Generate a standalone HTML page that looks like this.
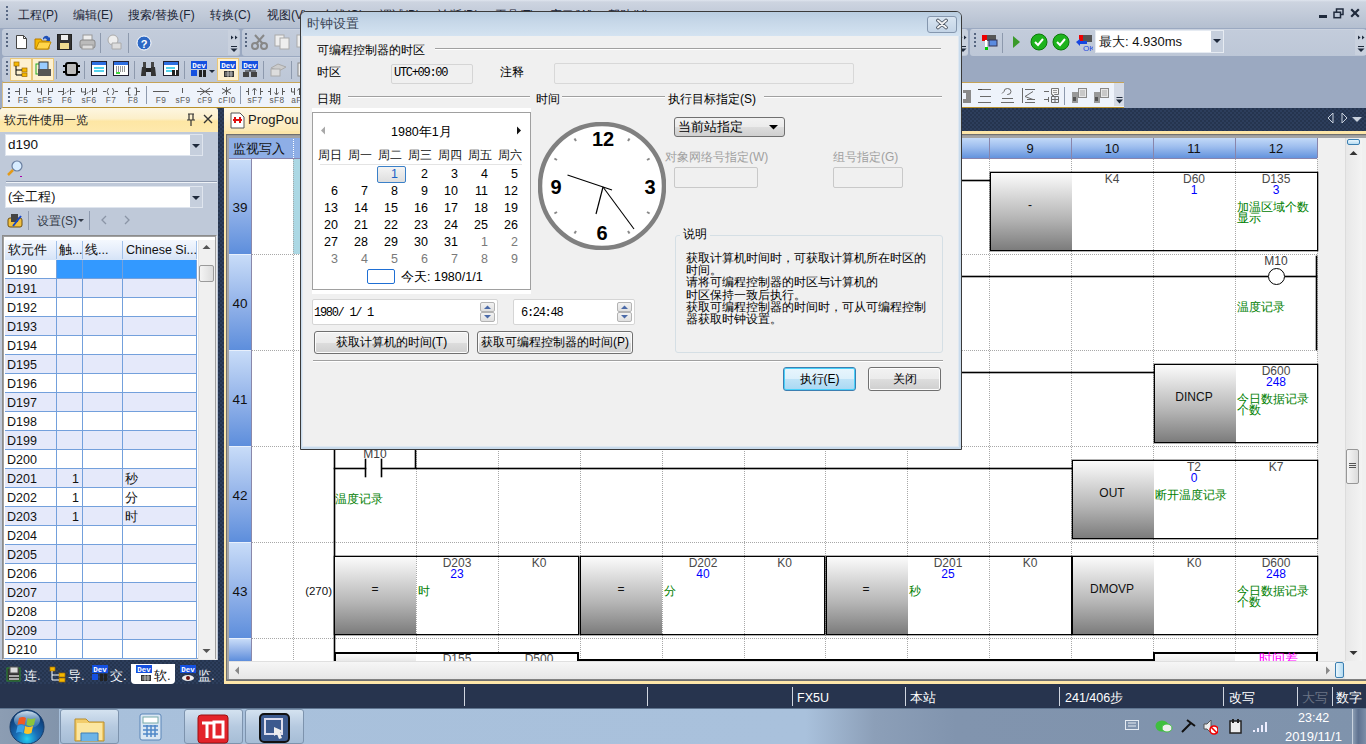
<!DOCTYPE html><html><head><meta charset="utf-8"><style>
html,body{margin:0;padding:0;}
body{width:1366px;height:744px;overflow:hidden;position:relative;background:#9ba9c1;font-family:"Liberation Sans",sans-serif;font-size:12px;color:#000;}
div{position:absolute;box-sizing:border-box;white-space:nowrap;}
.t{line-height:1;}
</style></head><body>
<div style="left:0px;top:0px;width:1366px;height:28px;background:linear-gradient(#dfe5ee 0,#cdd4e0 2px,#b4bfd0 100%);"></div>
<div style="left:6px;top:6px;width:2px;height:2px;background:#5a6a85;"></div>
<div style="left:6px;top:10px;width:2px;height:2px;background:#5a6a85;"></div>
<div style="left:6px;top:14px;width:2px;height:2px;background:#5a6a85;"></div>
<div style="left:6px;top:18px;width:2px;height:2px;background:#5a6a85;"></div>
<div style="left:18px;top:8px;font-size:12px;color:#1b2536;line-height:15px;">工程(P)</div>
<div style="left:73px;top:8px;font-size:12px;color:#1b2536;line-height:15px;">编辑(E)</div>
<div style="left:128px;top:8px;font-size:12px;color:#1b2536;line-height:15px;">搜索/替换(F)</div>
<div style="left:210px;top:8px;font-size:12px;color:#1b2536;line-height:15px;">转换(C)</div>
<div style="left:267px;top:8px;font-size:12px;color:#1b2536;line-height:15px;">视图(V)</div>
<div style="left:322px;top:8px;font-size:12px;color:#1b2536;line-height:15px;">在线(O)</div>
<div style="left:380px;top:8px;font-size:12px;color:#1b2536;line-height:15px;">调试(B)</div>
<div style="left:438px;top:8px;font-size:12px;color:#1b2536;line-height:15px;">诊断(D)</div>
<div style="left:495px;top:8px;font-size:12px;color:#1b2536;line-height:15px;">工具(T)</div>
<div style="left:550px;top:8px;font-size:12px;color:#1b2536;line-height:15px;">窗口(W)</div>
<div style="left:608px;top:8px;font-size:12px;color:#1b2536;line-height:15px;">帮助(H)</div>
<div style="left:1319px;top:15px;width:8px;height:3px;background:#1f2a3c;"></div>
<svg style="position:absolute;left:1333px;top:8px" width="11" height="11"><rect x="3.5" y="1" width="6.5" height="5.5" fill="none" stroke="#1f2a3c" stroke-width="1.5"/><rect x="1" y="4.2" width="6.5" height="5.5" fill="#bcc6d5" stroke="#1f2a3c" stroke-width="1.5"/></svg>
<svg style="position:absolute;left:1350px;top:8px" width="10" height="10"><path d="M1.2 1.2L8.8 8.8M8.8 1.2L1.2 8.8" stroke="#1f2a3c" stroke-width="2.2"/></svg>
<div style="left:2px;top:29px;width:238px;height:27px;background:linear-gradient(#d3dae5 0,#c3ccdb 1px,#bdc7d7 100%);border-radius:3px;"></div>
<div style="left:6px;top:33px;width:2px;height:2px;background:#56657f;"></div>
<div style="left:6px;top:37px;width:2px;height:2px;background:#56657f;"></div>
<div style="left:6px;top:41px;width:2px;height:2px;background:#56657f;"></div>
<div style="left:6px;top:45px;width:2px;height:2px;background:#56657f;"></div>
<svg style="position:absolute;left:15px;top:34px" width="13" height="16" viewBox="0 0 13 16"><path d="M1.5 1.5h7l3 3v10h-10z" fill="#fff" stroke="#444"/><path d="M8.5 1.5v3h3" fill="none" stroke="#444"/></svg>
<svg style="position:absolute;left:34px;top:34px" width="18" height="16" viewBox="0 0 18 16"><path d="M1 5h6l1 2h7v8H1z" fill="#f5b800" stroke="#b87a00"/><path d="M2 15l3-7h12l-3 7z" fill="#ffd54a" stroke="#c08a00"/><path d="M9 4c2-3 5-3 6 0l1-1v4h-4l1-1c-1-2-3-2-4 0z" fill="#1d4fb8"/></svg>
<svg style="position:absolute;left:57px;top:34px" width="15" height="16" viewBox="0 0 15 16"><rect x="0.5" y="0.5" width="14" height="15" fill="#333" stroke="#222"/><rect x="4" y="1" width="7" height="5" fill="#eee"/><rect x="3" y="9" width="9" height="6" fill="#f0dc90"/></svg>
<svg style="position:absolute;left:79px;top:34px" width="17" height="16" viewBox="0 0 17 16"><rect x="4" y="1" width="9" height="6" fill="#eee" stroke="#999"/><rect x="1" y="6" width="15" height="8" rx="2" fill="#bbb" stroke="#888"/><rect x="3" y="11" width="11" height="4" fill="#ddd" stroke="#999"/></svg>
<div style="left:100px;top:33px;width:1px;height:20px;background:#8d99ad;"></div>
<svg style="position:absolute;left:107px;top:34px" width="16" height="16" viewBox="0 0 16 16"><circle cx="6" cy="6" r="5" fill="#eee" stroke="#aaa"/><path d="M5 9h9v6H5z" fill="#ddd" stroke="#aaa"/></svg>
<div style="left:128px;top:33px;width:1px;height:20px;background:#8d99ad;"></div>
<svg style="position:absolute;left:136px;top:35px" width="16" height="16" viewBox="0 0 16 16"><circle cx="8" cy="8" r="7" fill="#2d68c4" stroke="#fff" stroke-width="1"/><text x="8" y="12.5" font-size="11" font-weight="bold" fill="#fff" text-anchor="middle" font-family="Liberation Sans">?</text></svg>
<div style="left:228px;top:30px;width:11px;height:25px;background:#c9d1de;border-radius:0 3px 3px 0;"></div>
<svg style="position:absolute;left:229px;top:33px" width="9" height="22" viewBox="0 0 9 22"><path d="M2 2.5l2.5 2-2.5 2zM6 2.5l2.5 2-2.5 2z" fill="#1f2a3c"/><path d="M2 13.5h6" stroke="#1f2a3c" stroke-width="1"/><path d="M1.5 15.5h7l-3.5 3.5z" fill="#1f2a3c"/></svg>
<div style="left:242px;top:29px;width:726px;height:27px;background:linear-gradient(#d3dae5 0,#c3ccdb 1px,#bdc7d7 100%);border-radius:3px;"></div>
<div style="left:957px;top:30px;width:11px;height:25px;background:#c9d1de;border-radius:0 3px 3px 0;"></div>
<svg style="position:absolute;left:958px;top:33px" width="9" height="22" viewBox="0 0 9 22"><path d="M2 2.5l2.5 2-2.5 2zM6 2.5l2.5 2-2.5 2z" fill="#1f2a3c"/><path d="M2 13.5h6" stroke="#1f2a3c" stroke-width="1"/><path d="M1.5 15.5h7l-3.5 3.5z" fill="#1f2a3c"/></svg>
<div style="left:245px;top:33px;width:2px;height:2px;background:#56657f;"></div>
<div style="left:245px;top:37px;width:2px;height:2px;background:#56657f;"></div>
<div style="left:245px;top:41px;width:2px;height:2px;background:#56657f;"></div>
<div style="left:245px;top:45px;width:2px;height:2px;background:#56657f;"></div>
<svg style="position:absolute;left:251px;top:34px" width="17" height="16" viewBox="0 0 17 16"><circle cx="4" cy="12" r="3" fill="none" stroke="#888" stroke-width="2"/><circle cx="13" cy="12" r="3" fill="none" stroke="#888" stroke-width="2"/><path d="M5 10L13 1M12 10L4 1" stroke="#888" stroke-width="2"/></svg>
<svg style="position:absolute;left:274px;top:34px" width="16" height="16" viewBox="0 0 16 16"><rect x="1" y="1" width="9" height="11" fill="#eee" stroke="#aaa"/><rect x="6" y="4" width="9" height="11" fill="#eee" stroke="#aaa"/></svg>
<svg style="position:absolute;left:296px;top:34px" width="6" height="16" viewBox="0 0 6 16"><rect x="1" y="1" width="8" height="12" fill="#eee" stroke="#aaa"/></svg>
<div style="left:970px;top:29px;width:396px;height:27px;background:linear-gradient(#d3dae5 0,#c3ccdb 1px,#bdc7d7 100%);border-radius:3px;"></div>
<div style="left:974px;top:33px;width:2px;height:2px;background:#56657f;"></div>
<div style="left:974px;top:37px;width:2px;height:2px;background:#56657f;"></div>
<div style="left:974px;top:41px;width:2px;height:2px;background:#56657f;"></div>
<div style="left:974px;top:45px;width:2px;height:2px;background:#56657f;"></div>
<svg style="position:absolute;left:981px;top:34px" width="17" height="18" viewBox="0 0 17 18"><rect x="1" y="1" width="14" height="6" fill="#555"/><rect x="1" y="1" width="5" height="6" fill="#e00"/><rect x="8" y="6" width="8" height="6" fill="#5b8be0" stroke="#335"/><path d="M5 6v8" stroke="#fff" stroke-width="2"/><rect x="4" y="13" width="3" height="3" fill="#0c0"/></svg>
<div style="left:1002px;top:33px;width:1px;height:20px;background:#8d99ad;"></div>
<svg style="position:absolute;left:1012px;top:35px" width="9" height="14" viewBox="0 0 9 14"><path d="M1 1l7 6-7 6z" fill="#3a9a2a"/></svg>
<svg style="position:absolute;left:1030px;top:33px" width="18" height="18" viewBox="0 0 18 18"><circle cx="9" cy="9" r="8" fill="#1db31d" stroke="#0b7a0b"/><path d="M5 9l3 3 5-6" fill="none" stroke="#fff" stroke-width="2"/></svg>
<svg style="position:absolute;left:1052px;top:33px" width="18" height="18" viewBox="0 0 18 18"><circle cx="9" cy="9" r="8" fill="#1db31d" stroke="#0b7a0b"/><path d="M5 9l3 3 5-6" fill="none" stroke="#fff" stroke-width="2"/></svg>
<svg style="position:absolute;left:1075px;top:34px" width="18" height="18" viewBox="0 0 18 18"><rect x="4" y="1" width="13" height="7" fill="#555"/><rect x="4" y="1" width="4" height="7" fill="#e00"/><path d="M1 8l4-3v2h7v3H5v2z" fill="#1646e0"/><text x="8" y="17" font-size="8" fill="#1646e0" font-family="Liberation Sans">OK</text></svg>
<div style="left:1095px;top:30px;width:129px;height:23px;background:#fff;border:1px solid #e6ebf2;"></div>
<div style="left:1099px;top:34px;font-size:13px;line-height:15px;color:#111;">最大: 4.930ms</div>
<div style="left:1211px;top:31px;width:12px;height:21px;background:#c6cfdd;"></div>
<svg style="position:absolute;left:1213px;top:39px" width="8" height="5" viewBox="0 0 8 5"><path d="M0 0h8l-4 4z" fill="#1f2a3c"/></svg>
<div style="left:1355px;top:30px;width:11px;height:25px;background:#c9d1de;"></div>
<svg style="position:absolute;left:1356px;top:33px" width="9" height="22" viewBox="0 0 9 22"><path d="M2 2.5l2.5 2-2.5 2zM6 2.5l2.5 2-2.5 2z" fill="#1f2a3c"/><path d="M2 13.5h6" stroke="#1f2a3c" stroke-width="1"/><path d="M1.5 15.5h7l-3.5 3.5z" fill="#1f2a3c"/></svg>
<div style="left:2px;top:57px;width:960px;height:25px;background:linear-gradient(#d3dae5 0,#c3ccdb 1px,#bdc7d7 100%);border-radius:3px;"></div>
<div style="left:6px;top:61px;width:2px;height:2px;background:#56657f;"></div>
<div style="left:6px;top:65px;width:2px;height:2px;background:#56657f;"></div>
<div style="left:6px;top:69px;width:2px;height:2px;background:#56657f;"></div>
<div style="left:6px;top:73px;width:2px;height:2px;background:#56657f;"></div>
<div style="left:10px;top:58px;width:22px;height:23px;background:#fdf0d0;border:1px solid #e8c77a;"></div>
<div style="left:32px;top:58px;width:22px;height:23px;background:#fdf0d0;border:1px solid #e8c77a;"></div>
<svg style="position:absolute;left:13px;top:61px" width="16" height="16" viewBox="0 0 16 16"><rect x="1" y="1" width="5" height="4" fill="#f5b800" stroke="#a06a00" stroke-width="0.7"/><rect x="9" y="7" width="5" height="4" fill="#f5b800" stroke="#a06a00" stroke-width="0.7"/><rect x="9" y="12" width="5" height="3.5" fill="#f5b800" stroke="#a06a00" stroke-width="0.7"/><path d="M3 5v9h6M3 9h6" fill="none" stroke="#000"/></svg>
<svg style="position:absolute;left:35px;top:61px" width="17" height="16" viewBox="0 0 17 16"><rect x="1" y="3" width="10" height="10" fill="none" stroke="#2a2"/><rect x="4" y="1" width="9" height="8" fill="#9cf" stroke="#333"/><rect x="3" y="8" width="13" height="7" fill="#555"/></svg>
<div style="left:56px;top:61px;width:1px;height:18px;background:#8d99ad;"></div>
<svg style="position:absolute;left:63px;top:62px" width="17" height="14" viewBox="0 0 17 14"><rect x="3" y="1" width="11" height="12" rx="2" fill="#bbb" stroke="#000" stroke-width="2"/><path d="M0 4h3M0 10h3M14 4h3M14 10h3" stroke="#000" stroke-width="2"/></svg>
<div style="left:84px;top:61px;width:1px;height:18px;background:#8d99ad;"></div>
<svg style="position:absolute;left:91px;top:61px" width="16" height="16" viewBox="0 0 16 16"><rect x="0.5" y="0.5" width="15" height="14" fill="#fff" stroke="#223"/><rect x="1" y="1" width="14" height="3" fill="#2e6ee0"/><path d="M3 7h10M3 10h10" stroke="#1cc4e8" stroke-width="1.5"/></svg>
<svg style="position:absolute;left:113px;top:61px" width="16" height="16" viewBox="0 0 16 16"><rect x="0.5" y="0.5" width="15" height="14" fill="#fff" stroke="#223"/><rect x="1" y="1" width="14" height="3" fill="#2e6ee0"/><path d="M3 6h10M3 8h10M3 10h10" stroke="#333" stroke-dasharray="1 1"/><path d="M3 12h4" stroke="#0c0" stroke-width="1.5"/></svg>
<div style="left:134px;top:61px;width:1px;height:18px;background:#8d99ad;"></div>
<svg style="position:absolute;left:140px;top:61px" width="17" height="16" viewBox="0 0 17 16"><path d="M2 6h4v9H1zM11 6h4l1 9h-5z" fill="#333"/><rect x="3" y="1" width="3" height="5" fill="#444"/><rect x="11" y="1" width="3" height="5" fill="#444"/><rect x="6" y="7" width="5" height="4" fill="#222"/></svg>
<svg style="position:absolute;left:163px;top:61px" width="17" height="16" viewBox="0 0 17 16"><rect x="0.5" y="0.5" width="15" height="14" fill="#fff" stroke="#223"/><rect x="1" y="1" width="14" height="3" fill="#2e6ee0"/><path d="M3 7h9M3 10h6" stroke="#1cc4e8" stroke-width="1.5"/><path d="M9 9h3v6H9zM13 9h3v6h-3z" fill="#222"/></svg>
<div style="left:184px;top:61px;width:1px;height:18px;background:#8d99ad;"></div>
<svg style="position:absolute;left:191px;top:61px" width="17" height="17" viewBox="0 0 17 17"><rect x="0" y="0" width="16" height="8" fill="#1450e0"/><text x="8" y="7" font-size="7.5" font-weight="bold" fill="#fff" text-anchor="middle" font-family="Liberation Mono">Dev</text><rect x="0" y="9" width="6" height="6" fill="#1450e0"/><path d="M8 9h3v7H8zM12 9h3v7h-3z" fill="#222"/></svg>
<svg style="position:absolute;left:209px;top:70px" width="6" height="4" viewBox="0 0 6 4"><path d="M0 0h6l-3 3z" fill="#1f2a3c"/></svg>
<div style="left:217px;top:58px;width:22px;height:23px;background:#fdf0d0;border:1px solid #e8c77a;"></div>
<svg style="position:absolute;left:220px;top:61px" width="17" height="17" viewBox="0 0 17 17"><rect x="0" y="0" width="16" height="8" fill="#1450e0"/><text x="8" y="7" font-size="7.5" font-weight="bold" fill="#fff" text-anchor="middle" font-family="Liberation Mono">Dev</text><rect x="4" y="10" width="10" height="6" fill="#333"/><path d="M5 12h8M5 14h8M8 10v6M11 10v6" stroke="#fff" stroke-width="0.6"/></svg>
<svg style="position:absolute;left:242px;top:61px" width="17" height="17" viewBox="0 0 17 17"><rect x="0" y="0" width="16" height="8" fill="#1450e0"/><text x="8" y="7" font-size="7.5" font-weight="bold" fill="#fff" text-anchor="middle" font-family="Liberation Mono">Dev</text><path d="M8 8v2M3 10h11" stroke="#222"/><rect x="1" y="11" width="6" height="5" fill="#444"/><rect x="9" y="11" width="6" height="5" fill="#444"/></svg>
<div style="left:263px;top:61px;width:1px;height:18px;background:#8d99ad;"></div>
<svg style="position:absolute;left:270px;top:62px" width="17" height="15" viewBox="0 0 17 15"><path d="M1 6l7-4 8 3-7 4z" fill="#ccc" stroke="#aaa"/><rect x="1" y="7" width="9" height="7" fill="#ddd" stroke="#aaa"/></svg>
<div style="left:291px;top:61px;width:1px;height:18px;background:#8d99ad;"></div>
<svg style="position:absolute;left:297px;top:62px" width="5" height="15" viewBox="0 0 5 15"><rect x="1" y="1" width="6" height="13" fill="#eee" stroke="#888"/></svg>
<div style="left:2px;top:82px;width:1122px;height:26px;background:#eef3fb;border-top:1px solid #c5a357;border-bottom:1px solid #b8902a;border-left:1px solid #d8c190;"></div>
<div style="left:8px;top:88px;width:2px;height:2px;background:#56657f;"></div>
<div style="left:8px;top:92px;width:2px;height:2px;background:#56657f;"></div>
<div style="left:8px;top:96px;width:2px;height:2px;background:#56657f;"></div>
<div style="left:8px;top:100px;width:2px;height:2px;background:#56657f;"></div>
<svg style="position:absolute;left:14px;top:87px" width="20" height="10" viewBox="0 0 20 10"><path d="M1 4.5h5M5.5 1v7M12.5 1v7M12 4.5h5" stroke="#5a5a5a" stroke-width="1" fill="none"/></svg>
<div style="left:13px;top:95px;font-size:8.3px;line-height:10px;color:#5a5a5a;width:20px;text-align:center;letter-spacing:0.4px;">F5</div>
<svg style="position:absolute;left:36px;top:87px" width="20" height="10" viewBox="0 0 20 10"><path d="M1.5 1v4h4M5.5 1v7M12.5 1v7M12.5 4.5h4M16.5 1v4" stroke="#5a5a5a" stroke-width="1" fill="none"/></svg>
<div style="left:35px;top:95px;font-size:8.3px;line-height:10px;color:#5a5a5a;width:20px;text-align:center;letter-spacing:0.4px;">sF5</div>
<svg style="position:absolute;left:58px;top:87px" width="20" height="10" viewBox="0 0 20 10"><path d="M0 4.5h5M5.5 1v7M12.5 1v7M12 4.5h5" stroke="#5a5a5a" stroke-width="1" fill="none"/><path d="M4 8L14 2" stroke="#5a5a5a" stroke-width="1" fill="none" stroke-dasharray="2 1"/></svg>
<div style="left:57px;top:95px;font-size:8.3px;line-height:10px;color:#5a5a5a;width:20px;text-align:center;letter-spacing:0.4px;">F6</div>
<svg style="position:absolute;left:80px;top:87px" width="20" height="10" viewBox="0 0 20 10"><path d="M1.5 1v4h4M5.5 1v7M12.5 1v7M12.5 4.5h4M16.5 1v4" stroke="#5a5a5a" stroke-width="1" fill="none"/><path d="M4 8L14 2" stroke="#5a5a5a" stroke-width="1" fill="none" stroke-dasharray="2 1"/></svg>
<div style="left:79px;top:95px;font-size:8.3px;line-height:10px;color:#5a5a5a;width:20px;text-align:center;letter-spacing:0.4px;">sF6</div>
<svg style="position:absolute;left:102px;top:87px" width="20" height="10" viewBox="0 0 20 10"><path d="M1 4.5h3M6.5 1q-3 3.5 0 7M10.5 1q3 3.5 0 7M13 4.5h3" stroke="#5a5a5a" stroke-width="1" fill="none"/></svg>
<div style="left:101px;top:95px;font-size:8.3px;line-height:10px;color:#5a5a5a;width:20px;text-align:center;letter-spacing:0.4px;">F7</div>
<svg style="position:absolute;left:124px;top:87px" width="20" height="10" viewBox="0 0 20 10"><path d="M1 4.5h3M6.5 1h-2v7h2M10.5 1h2v7h-2M13 4.5h3" stroke="#5a5a5a" stroke-width="1" fill="none"/></svg>
<div style="left:123px;top:95px;font-size:8.3px;line-height:10px;color:#5a5a5a;width:20px;text-align:center;letter-spacing:0.4px;">F8</div>
<div style="left:146px;top:86px;width:1px;height:18px;background:#8d99ad;"></div>
<svg style="position:absolute;left:152px;top:87px" width="20" height="10" viewBox="0 0 20 10"><path d="M1 4.5h16" stroke="#5a5a5a" stroke-width="1" fill="none"/></svg>
<div style="left:151px;top:95px;font-size:8.3px;line-height:10px;color:#5a5a5a;width:20px;text-align:center;letter-spacing:0.4px;">F9</div>
<svg style="position:absolute;left:174px;top:87px" width="20" height="10" viewBox="0 0 20 10"><path d="M8.5 1v5" stroke="#5a5a5a" stroke-width="1" fill="none"/></svg>
<div style="left:173px;top:95px;font-size:8.3px;line-height:10px;color:#5a5a5a;width:20px;text-align:center;letter-spacing:0.4px;">sF9</div>
<svg style="position:absolute;left:196px;top:87px" width="20" height="10" viewBox="0 0 20 10"><path d="M1 4.5h16M4 1l10 7M14 1L4 8" stroke="#5a5a5a" stroke-width="1" fill="none"/></svg>
<div style="left:195px;top:95px;font-size:8.3px;line-height:10px;color:#5a5a5a;width:20px;text-align:center;letter-spacing:0.4px;">cF9</div>
<svg style="position:absolute;left:218px;top:87px" width="20" height="10" viewBox="0 0 20 10"><path d="M8.5 0v8M4 1.5l9 5M13 1.5l-9 5" stroke="#5a5a5a" stroke-width="1" fill="none"/></svg>
<div style="left:217px;top:95px;font-size:8.3px;line-height:10px;color:#5a5a5a;width:20px;text-align:center;letter-spacing:0.4px;">cFI0</div>
<div style="left:240px;top:86px;width:1px;height:18px;background:#8d99ad;"></div>
<svg style="position:absolute;left:246px;top:87px" width="20" height="10" viewBox="0 0 20 10"><path d="M0 4.5h3M2.5 1v7M8.5 2v6M6.5 3.5l2-2.5 2 2.5M14.5 1v7M14 4.5h3" stroke="#5a5a5a" stroke-width="1" fill="none"/></svg>
<div style="left:245px;top:95px;font-size:8.3px;line-height:10px;color:#5a5a5a;width:20px;text-align:center;letter-spacing:0.4px;">sF7</div>
<svg style="position:absolute;left:268px;top:87px" width="20" height="10" viewBox="0 0 20 10"><path d="M0 4.5h3M2.5 1v7M8.5 1v6M6.5 5.5l2 2.5 2-2.5M14.5 1v7M14 4.5h3" stroke="#5a5a5a" stroke-width="1" fill="none"/></svg>
<div style="left:267px;top:95px;font-size:8.3px;line-height:10px;color:#5a5a5a;width:20px;text-align:center;letter-spacing:0.4px;">sF8</div>
<svg style="position:absolute;left:290px;top:87px" width="20" height="10" viewBox="0 0 20 10"><path d="M1.5 1v4h3M4.5 1v7M9.5 2v6M7.5 3.5l2-2.5 2 2.5" stroke="#5a5a5a" stroke-width="1" fill="none"/></svg>
<div style="left:289px;top:95px;font-size:8.3px;line-height:10px;color:#5a5a5a;width:20px;text-align:center;letter-spacing:0.4px;">aF7</div>
<svg style="position:absolute;left:962px;top:87px" width="10" height="17" viewBox="0 0 10 17"><rect x="1" y="3" width="8" height="13" fill="#8a8a8a"/><rect x="0" y="6" width="4" height="6" fill="#eef3fb"/></svg>
<svg style="position:absolute;left:977px;top:87px" width="15" height="17" viewBox="0 0 15 17"><path d="M1 2.5h13M3 9.5h11M1 15.5h13" stroke="#6a6a6a" stroke-width="1" fill="none"/><path d="M1 2.5h4" stroke="#444"/></svg>
<svg style="position:absolute;left:1000px;top:87px" width="15" height="17" viewBox="0 0 15 17"><path d="M4 4.5a3.5 3 0 1 1 3.5 3h-0.5M4 4.5l-2 2" stroke="#6a6a6a" stroke-width="1" fill="none"/><path d="M2 11.5h11M1 15.5h13" stroke="#6a6a6a" stroke-width="1" fill="none"/></svg>
<svg style="position:absolute;left:1021px;top:87px" width="15" height="17" viewBox="0 0 15 17"><path d="M1.5 1v15M4 2.5h10M4 15.5h10M4 9.5l8-5M4 9.5l8 3M6 12.5h8" stroke="#6a6a6a" stroke-width="1" fill="none"/></svg>
<svg style="position:absolute;left:1043px;top:87px" width="17" height="17" viewBox="0 0 17 17"><path d="M8.5 1.5h7v6h-4l-2 2v-2h-1z" fill="#f4f4f4" stroke="#777"/><path d="M10 3.5h4M10 5.5h4" stroke="#999"/><path d="M1 4.5h5M1 12.5h4M5.5 10v5M8.5 9.5h7v6h-7zM8.5 12.5h7M12 9.5v6" stroke="#6a6a6a" fill="none"/></svg>
<div style="left:1064px;top:87px;width:1px;height:18px;background:#8d99ad;"></div>
<svg style="position:absolute;left:1071px;top:87px" width="17" height="17" viewBox="0 0 17 17"><rect x="1" y="5" width="6" height="11" fill="#999"/><rect x="7.5" y="1.5" width="8" height="9" fill="#e6e6e6" stroke="#888"/><path d="M9 4h5M9 6h5M9 8h5" stroke="#aaa"/><rect x="2" y="10" width="3" height="4" fill="#555"/></svg>
<svg style="position:absolute;left:1093px;top:87px" width="17" height="17" viewBox="0 0 17 17"><rect x="1" y="5" width="6" height="11" fill="#999"/><rect x="7.5" y="1.5" width="8" height="9" fill="#e6e6e6" stroke="#888"/><path d="M9 4h5M9 6h5M9 8h5" stroke="#aaa"/><rect x="2" y="10" width="3" height="4" fill="#555"/></svg>
<div style="left:1114px;top:83px;width:10px;height:23px;background:#d5dbe6;"></div>
<svg style="position:absolute;left:1115px;top:96px" width="9" height="9" viewBox="0 0 9 9"><path d="M1.5 1.5h6" stroke="#1f2a3c" stroke-width="1"/><path d="M1 3.5h7l-3.5 4z" fill="#1f2a3c"/></svg>
<div style="left:0px;top:108px;width:1366px;height:600px;background-color:#25344e;background-image:linear-gradient(45deg,#2d3e5c 25%,transparent 25%,transparent 75%,#2d3e5c 75%),linear-gradient(45deg,#2d3e5c 25%,transparent 25%,transparent 75%,#2d3e5c 75%);background-size:4px 4px;background-position:0 0,2px 2px;"></div>
<div style="left:0px;top:108px;width:218px;height:24px;background:linear-gradient(#fdf6e1 0,#fcefc9 45%,#fde6a4 55%,#fee9ad 100%);border-radius:2px 2px 0 0;"></div>
<div style="left:4px;top:113px;font-size:12px;line-height:15px;color:#1b1b1b;">软元件使用一览</div>
<svg style="position:absolute;left:186px;top:113px" width="10" height="14" viewBox="0 0 10 14"><path d="M2 1h6M3 1v6M7 1v6M1 7h8M5 7v6" stroke="#333" stroke-width="1.2" fill="none"/></svg>
<svg style="position:absolute;left:203px;top:114px" width="10" height="10" viewBox="0 0 10 10"><path d="M1 1l8 8M9 1L1 9" stroke="#333" stroke-width="1.4"/></svg>
<div style="left:0px;top:132px;width:218px;height:102px;background:#bfc9d9;"></div>
<div style="left:5px;top:134px;width:198px;height:22px;background:#fff;border:1px solid #dfe5ee;"></div>
<div style="left:8px;top:137px;font-size:13.5px;line-height:16px;color:#111;">d190</div>
<div style="left:190px;top:135px;width:12px;height:20px;background:#c6cfdd;"></div>
<svg style="position:absolute;left:192px;top:144px" width="8" height="5" viewBox="0 0 8 5"><path d="M0 0h8l-4 4z" fill="#1f2a3c"/></svg>
<svg style="position:absolute;left:6px;top:160px" width="18" height="18" viewBox="0 0 18 18"><circle cx="11" cy="6" r="5" fill="#d8ecff" stroke="#6a7fa0" stroke-width="1.2"/><path d="M7 10L2 15" stroke="#e39a1a" stroke-width="2.5"/><rect x="14" y="16" width="2" height="1" fill="#a0a"/></svg>
<div style="left:6px;top:181px;width:211px;height:1px;background:#8f9bb0;"></div>
<div style="left:6px;top:182px;width:211px;height:1px;background:#eef2f7;"></div>
<div style="left:5px;top:186px;width:198px;height:22px;background:#fff;border:1px solid #dfe5ee;"></div>
<div style="left:8px;top:189px;font-size:12.5px;line-height:16px;color:#111;">(全工程)</div>
<div style="left:190px;top:187px;width:12px;height:20px;background:#c6cfdd;"></div>
<svg style="position:absolute;left:192px;top:196px" width="8" height="5" viewBox="0 0 8 5"><path d="M0 0h8l-4 4z" fill="#1f2a3c"/></svg>
<svg style="position:absolute;left:7px;top:213px" width="16" height="15" viewBox="0 0 16 15"><rect x="1" y="5" width="14" height="9" rx="2" fill="#f0c040" stroke="#705010"/><rect x="4" y="1" width="7" height="8" fill="#444"/><path d="M14 3L6 13" stroke="#1546c8" stroke-width="2"/></svg>
<div style="left:28px;top:211px;width:1px;height:19px;background:#8f9bb0;"></div>
<div style="left:37px;top:214px;font-size:12px;line-height:15px;color:#333a48;">设置(S)</div>
<svg style="position:absolute;left:78px;top:219px" width="6" height="4" viewBox="0 0 6 4"><path d="M0 0h6l-3 3z" fill="#333a48"/></svg>
<div style="left:89px;top:211px;width:1px;height:19px;background:#8f9bb0;"></div>
<svg style="position:absolute;left:101px;top:215px" width="7" height="10" viewBox="0 0 7 10"><path d="M5 1L1 5l4 4" stroke="#8b95a6" stroke-width="1.3" fill="none"/></svg>
<svg style="position:absolute;left:124px;top:215px" width="7" height="10" viewBox="0 0 7 10"><path d="M1 1l4 4-4 4" stroke="#8b95a6" stroke-width="1.3" fill="none"/></svg>
<div style="left:0px;top:234px;width:218px;height:426px;background:#bfc9d9;"></div>
<div style="left:2px;top:235px;width:215px;height:425px;background:#fff;border:1px solid #8c8c8c;border-right-color:#e8e8e8;border-bottom-color:#e8e8e8;"></div>
<div style="left:3px;top:236px;width:213px;height:423px;background:#fff;border:1px solid #a0a0a0;"></div>
<div style="left:5px;top:240px;width:192px;height:20px;background:linear-gradient(#f4f8fe 0,#e6eefb 50%,#d5e3f7 100%);"></div>
<div style="left:56px;top:241px;width:1px;height:18px;background:#9fc0ea;"></div>
<div style="left:82px;top:241px;width:1px;height:18px;background:#9fc0ea;"></div>
<div style="left:122px;top:241px;width:1px;height:18px;background:#9fc0ea;"></div>
<div style="left:196px;top:241px;width:1px;height:18px;background:#9fc0ea;"></div>
<div style="left:8px;top:243px;font-size:12.5px;line-height:15px;color:#111;">软元件</div>
<div style="left:59px;top:243px;font-size:12.5px;line-height:15px;color:#111;">触...</div>
<div style="left:85px;top:243px;font-size:12.5px;line-height:15px;color:#111;">线...</div>
<div style="left:126px;top:243px;font-size:12.5px;line-height:15px;color:#111;">Chinese Si...</div>
<div style="left:5px;top:260px;width:192px;height:19px;background:#ffffff;"></div>
<div style="left:56px;top:260px;width:141px;height:19px;background:#3399ff;"></div>
<div style="left:5px;top:278px;width:192px;height:1px;background:#73a0dc;"></div>
<div style="left:7px;top:263px;font-size:12.5px;line-height:14px;color:#111;">D190</div>
<div style="left:5px;top:279px;width:192px;height:19px;background:#e5e9fa;"></div>
<div style="left:5px;top:297px;width:192px;height:1px;background:#73a0dc;"></div>
<div style="left:7px;top:282px;font-size:12.5px;line-height:14px;color:#111;">D191</div>
<div style="left:5px;top:298px;width:192px;height:19px;background:#ffffff;"></div>
<div style="left:5px;top:316px;width:192px;height:1px;background:#73a0dc;"></div>
<div style="left:7px;top:301px;font-size:12.5px;line-height:14px;color:#111;">D192</div>
<div style="left:5px;top:317px;width:192px;height:19px;background:#e5e9fa;"></div>
<div style="left:5px;top:335px;width:192px;height:1px;background:#73a0dc;"></div>
<div style="left:7px;top:320px;font-size:12.5px;line-height:14px;color:#111;">D193</div>
<div style="left:5px;top:336px;width:192px;height:19px;background:#ffffff;"></div>
<div style="left:5px;top:354px;width:192px;height:1px;background:#73a0dc;"></div>
<div style="left:7px;top:339px;font-size:12.5px;line-height:14px;color:#111;">D194</div>
<div style="left:5px;top:355px;width:192px;height:19px;background:#e5e9fa;"></div>
<div style="left:5px;top:373px;width:192px;height:1px;background:#73a0dc;"></div>
<div style="left:7px;top:358px;font-size:12.5px;line-height:14px;color:#111;">D195</div>
<div style="left:5px;top:374px;width:192px;height:19px;background:#ffffff;"></div>
<div style="left:5px;top:392px;width:192px;height:1px;background:#73a0dc;"></div>
<div style="left:7px;top:377px;font-size:12.5px;line-height:14px;color:#111;">D196</div>
<div style="left:5px;top:393px;width:192px;height:19px;background:#e5e9fa;"></div>
<div style="left:5px;top:411px;width:192px;height:1px;background:#73a0dc;"></div>
<div style="left:7px;top:396px;font-size:12.5px;line-height:14px;color:#111;">D197</div>
<div style="left:5px;top:412px;width:192px;height:19px;background:#ffffff;"></div>
<div style="left:5px;top:430px;width:192px;height:1px;background:#73a0dc;"></div>
<div style="left:7px;top:415px;font-size:12.5px;line-height:14px;color:#111;">D198</div>
<div style="left:5px;top:431px;width:192px;height:19px;background:#e5e9fa;"></div>
<div style="left:5px;top:449px;width:192px;height:1px;background:#73a0dc;"></div>
<div style="left:7px;top:434px;font-size:12.5px;line-height:14px;color:#111;">D199</div>
<div style="left:5px;top:450px;width:192px;height:19px;background:#ffffff;"></div>
<div style="left:5px;top:468px;width:192px;height:1px;background:#73a0dc;"></div>
<div style="left:7px;top:453px;font-size:12.5px;line-height:14px;color:#111;">D200</div>
<div style="left:5px;top:469px;width:192px;height:19px;background:#e5e9fa;"></div>
<div style="left:5px;top:487px;width:192px;height:1px;background:#73a0dc;"></div>
<div style="left:72px;top:472px;font-size:12.5px;line-height:14px;color:#111;">1</div>
<div style="left:125px;top:472px;font-size:12.5px;line-height:14px;color:#111;">秒</div>
<div style="left:7px;top:472px;font-size:12.5px;line-height:14px;color:#111;">D201</div>
<div style="left:5px;top:488px;width:192px;height:19px;background:#ffffff;"></div>
<div style="left:5px;top:506px;width:192px;height:1px;background:#73a0dc;"></div>
<div style="left:72px;top:491px;font-size:12.5px;line-height:14px;color:#111;">1</div>
<div style="left:125px;top:491px;font-size:12.5px;line-height:14px;color:#111;">分</div>
<div style="left:7px;top:491px;font-size:12.5px;line-height:14px;color:#111;">D202</div>
<div style="left:5px;top:507px;width:192px;height:19px;background:#e5e9fa;"></div>
<div style="left:5px;top:525px;width:192px;height:1px;background:#73a0dc;"></div>
<div style="left:72px;top:510px;font-size:12.5px;line-height:14px;color:#111;">1</div>
<div style="left:125px;top:510px;font-size:12.5px;line-height:14px;color:#111;">时</div>
<div style="left:7px;top:510px;font-size:12.5px;line-height:14px;color:#111;">D203</div>
<div style="left:5px;top:526px;width:192px;height:19px;background:#ffffff;"></div>
<div style="left:5px;top:544px;width:192px;height:1px;background:#73a0dc;"></div>
<div style="left:7px;top:529px;font-size:12.5px;line-height:14px;color:#111;">D204</div>
<div style="left:5px;top:545px;width:192px;height:19px;background:#e5e9fa;"></div>
<div style="left:5px;top:563px;width:192px;height:1px;background:#73a0dc;"></div>
<div style="left:7px;top:548px;font-size:12.5px;line-height:14px;color:#111;">D205</div>
<div style="left:5px;top:564px;width:192px;height:19px;background:#ffffff;"></div>
<div style="left:5px;top:582px;width:192px;height:1px;background:#73a0dc;"></div>
<div style="left:7px;top:567px;font-size:12.5px;line-height:14px;color:#111;">D206</div>
<div style="left:5px;top:583px;width:192px;height:19px;background:#e5e9fa;"></div>
<div style="left:5px;top:601px;width:192px;height:1px;background:#73a0dc;"></div>
<div style="left:7px;top:586px;font-size:12.5px;line-height:14px;color:#111;">D207</div>
<div style="left:5px;top:602px;width:192px;height:19px;background:#ffffff;"></div>
<div style="left:5px;top:620px;width:192px;height:1px;background:#73a0dc;"></div>
<div style="left:7px;top:605px;font-size:12.5px;line-height:14px;color:#111;">D208</div>
<div style="left:5px;top:621px;width:192px;height:19px;background:#e5e9fa;"></div>
<div style="left:5px;top:639px;width:192px;height:1px;background:#73a0dc;"></div>
<div style="left:7px;top:624px;font-size:12.5px;line-height:14px;color:#111;">D209</div>
<div style="left:5px;top:640px;width:192px;height:19px;background:#ffffff;"></div>
<div style="left:5px;top:658px;width:192px;height:1px;background:#73a0dc;"></div>
<div style="left:7px;top:643px;font-size:12.5px;line-height:14px;color:#111;">D210</div>
<div style="left:56px;top:260px;width:1px;height:399px;background:#73a0dc;"></div>
<div style="left:82px;top:260px;width:1px;height:399px;background:#73a0dc;"></div>
<div style="left:122px;top:260px;width:1px;height:399px;background:#73a0dc;"></div>
<div style="left:196px;top:260px;width:1px;height:399px;background:#73a0dc;"></div>
<div style="left:198px;top:240px;width:17px;height:419px;background:#f0f0f0;border-left:1px solid #e3e3e3;"></div>
<svg style="position:absolute;left:202px;top:244px" width="9" height="6" viewBox="0 0 9 6"><path d="M0.5 5L4.5 1l4 4z" fill="#555"/></svg>
<div style="left:199px;top:265px;width:15px;height:17px;background:linear-gradient(90deg,#f4f4f4,#dcdcdc);border:1px solid #9a9a9a;border-radius:2px;"></div>
<svg style="position:absolute;left:202px;top:648px" width="9" height="6" viewBox="0 0 9 6"><path d="M0.5 1h8l-4 4z" fill="#555"/></svg>
<div style="left:131px;top:664px;width:44px;height:20px;background:#fff;border-radius:0 0 4px 4px;"></div>
<svg style="position:absolute;left:5px;top:666px" width="17" height="17" viewBox="0 0 17 17"><rect x="2" y="2" width="13" height="13" fill="#333" stroke="#2a8a2a"/><rect x="5" y="1" width="8" height="6" fill="#ddd" stroke="#555"/><rect x="4" y="9" width="10" height="2" fill="#aaa"/><rect x="4" y="12" width="10" height="2" fill="#aaa"/></svg>
<svg style="position:absolute;left:49px;top:666px" width="17" height="17" viewBox="0 0 17 17"><rect x="1" y="1" width="5" height="4" fill="#f5b800" stroke="#a06a00" stroke-width="0.7"/><rect x="10" y="7" width="6" height="4" fill="#f5b800" stroke="#a06a00" stroke-width="0.7"/><rect x="10" y="12" width="6" height="4" fill="#f5b800" stroke="#a06a00" stroke-width="0.7"/><path d="M3 5v9h7M3 9h7" fill="none" stroke="#fff"/></svg>
<svg style="position:absolute;left:92px;top:665px" width="17" height="17" viewBox="0 0 17 17"><rect x="0" y="0" width="16" height="8" fill="#1450e0"/><text x="8" y="7" font-size="7.5" font-weight="bold" fill="#fff" text-anchor="middle" font-family="Liberation Mono">Dev</text><rect x="0" y="9" width="6" height="6" fill="#1450e0"/><path d="M8 9h3v7H8zM12 9h3v7h-3z" fill="#222"/></svg>
<svg style="position:absolute;left:136px;top:665px" width="17" height="17" viewBox="0 0 17 17"><rect x="0" y="0" width="16" height="8" fill="#1450e0"/><text x="8" y="7" font-size="7.5" font-weight="bold" fill="#fff" text-anchor="middle" font-family="Liberation Mono">Dev</text><rect x="5" y="10" width="10" height="6" fill="#333"/><path d="M6 12h8M6 14h8M9 10v6M12 10v6" stroke="#fff" stroke-width="0.6"/></svg>
<svg style="position:absolute;left:180px;top:665px" width="17" height="17" viewBox="0 0 17 17"><rect x="0" y="0" width="16" height="8" fill="#1450e0"/><text x="8" y="7" font-size="7.5" font-weight="bold" fill="#fff" text-anchor="middle" font-family="Liberation Mono">Dev</text><ellipse cx="8" cy="13" rx="6" ry="3" fill="#eee"/><circle cx="8" cy="13" r="2" fill="#6a1010"/></svg>
<div style="left:24px;top:668px;font-size:13px;line-height:15px;color:#eef2f8;">连.</div>
<div style="left:68px;top:668px;font-size:13px;line-height:15px;color:#eef2f8;">导.</div>
<div style="left:110px;top:668px;font-size:13px;line-height:15px;color:#eef2f8;">交.</div>
<div style="left:154px;top:668px;font-size:13px;line-height:15px;color:#111;">软.</div>
<div style="left:198px;top:668px;font-size:13px;line-height:15px;color:#eef2f8;">监.</div>
<div style="left:224px;top:108px;width:90px;height:26px;background:linear-gradient(#fdf7e6 0,#fcefcb 50%,#fde7ad 100%);"></div>
<svg style="position:absolute;left:230px;top:112px" width="15" height="17" viewBox="0 0 15 17"><path d="M1 1h9l4 4v11H1z" fill="#fff" stroke="#555"/><path d="M3 8h9M5 5v6M10 5v6" stroke="#e01010" stroke-width="2"/></svg>
<div style="left:248px;top:112px;font-size:13px;line-height:16px;color:#1a1a1a;">ProgPou</div>
<svg style="position:absolute;left:1326px;top:112px" width="36" height="14" viewBox="0 0 36 14"><path d="M7 1L2 6l5 5z" fill="none" stroke="#c8d0dc"/><path d="M16 1l5 5-5 5z" fill="none" stroke="#c8d0dc"/><path d="M26 5h10l-5 5z" fill="#c8d0dc"/></svg>
<div style="left:224px;top:131px;width:1142px;height:553px;background:#fde6a9;"></div>
<div style="left:226px;top:134px;width:1140px;height:547px;background:#707070;"></div>
<div style="left:227px;top:135px;width:1139px;height:545px;background:#a4a4a4;border-top:1px solid #9a9a9a;border-bottom:1px solid #808080;"></div>
<div style="left:229px;top:138px;width:1137px;height:541px;background:#f0f0f0;"></div>
<div style="left:229px;top:138px;width:1088px;height:21px;background:linear-gradient(#c3daf8 0,#9dbdee 45%,#6393dd 100%);border-bottom:1px solid #8884ad;"></div>
<div style="left:229px;top:138px;width:105px;height:21px;background:#8eaee6;border-bottom:1px solid #8884ad;"></div>
<div style="left:233px;top:141px;font-size:13px;line-height:15px;color:#111;">监视写入</div>
<div style="left:293px;top:139px;width:1px;height:19px;background-image:linear-gradient(#fff 50%,transparent 50%);background-size:1px 2px;"></div>
<div style="left:334px;top:142px;width:82px;text-align:center;font-size:13px;line-height:14px;color:#111;">1</div>
<div style="left:416px;top:138px;width:1px;height:20px;background:#8985ab;"></div>
<div style="left:416px;top:142px;width:82px;text-align:center;font-size:13px;line-height:14px;color:#111;">2</div>
<div style="left:498px;top:138px;width:1px;height:20px;background:#8985ab;"></div>
<div style="left:498px;top:142px;width:82px;text-align:center;font-size:13px;line-height:14px;color:#111;">3</div>
<div style="left:580px;top:138px;width:1px;height:20px;background:#8985ab;"></div>
<div style="left:580px;top:142px;width:82px;text-align:center;font-size:13px;line-height:14px;color:#111;">4</div>
<div style="left:662px;top:138px;width:1px;height:20px;background:#8985ab;"></div>
<div style="left:662px;top:142px;width:82px;text-align:center;font-size:13px;line-height:14px;color:#111;">5</div>
<div style="left:744px;top:138px;width:1px;height:20px;background:#8985ab;"></div>
<div style="left:744px;top:142px;width:81px;text-align:center;font-size:13px;line-height:14px;color:#111;">6</div>
<div style="left:825px;top:138px;width:1px;height:20px;background:#8985ab;"></div>
<div style="left:825px;top:142px;width:82px;text-align:center;font-size:13px;line-height:14px;color:#111;">7</div>
<div style="left:907px;top:138px;width:1px;height:20px;background:#8985ab;"></div>
<div style="left:907px;top:142px;width:82px;text-align:center;font-size:13px;line-height:14px;color:#111;">8</div>
<div style="left:989px;top:138px;width:1px;height:20px;background:#8985ab;"></div>
<div style="left:989px;top:142px;width:82px;text-align:center;font-size:13px;line-height:14px;color:#111;">9</div>
<div style="left:1071px;top:138px;width:1px;height:20px;background:#8985ab;"></div>
<div style="left:1071px;top:142px;width:82px;text-align:center;font-size:13px;line-height:14px;color:#111;">10</div>
<div style="left:1153px;top:138px;width:1px;height:20px;background:#8985ab;"></div>
<div style="left:1153px;top:142px;width:82px;text-align:center;font-size:13px;line-height:14px;color:#111;">11</div>
<div style="left:1235px;top:138px;width:1px;height:20px;background:#8985ab;"></div>
<div style="left:1235px;top:142px;width:82px;text-align:center;font-size:13px;line-height:14px;color:#111;">12</div>
<div style="left:1317px;top:138px;width:1px;height:20px;background:#8985ab;"></div>
<div style="left:251px;top:159px;width:1066px;height:502px;background:#fff;"></div>
<div style="left:1317px;top:159px;width:28px;height:502px;background:#f0f0f0;"></div>
<div style="left:229px;top:159px;width:22px;height:95px;background:linear-gradient(#c8dcf8 0,#8fb0e8 55%,#5d8edc 100%);border-top:1px solid #e8f0fc;"></div>
<div style="left:229px;top:200px;width:22px;text-align:center;font-size:13.5px;line-height:15px;color:#111;">39</div>
<div style="left:229px;top:254px;width:22px;height:96px;background:linear-gradient(#c8dcf8 0,#8fb0e8 55%,#5d8edc 100%);border-top:1px solid #e8f0fc;"></div>
<div style="left:229px;top:296px;width:22px;text-align:center;font-size:13.5px;line-height:15px;color:#111;">40</div>
<div style="left:229px;top:350px;width:22px;height:96px;background:linear-gradient(#c8dcf8 0,#8fb0e8 55%,#5d8edc 100%);border-top:1px solid #e8f0fc;"></div>
<div style="left:229px;top:392px;width:22px;text-align:center;font-size:13.5px;line-height:15px;color:#111;">41</div>
<div style="left:229px;top:446px;width:22px;height:96px;background:linear-gradient(#c8dcf8 0,#8fb0e8 55%,#5d8edc 100%);border-top:1px solid #e8f0fc;"></div>
<div style="left:229px;top:488px;width:22px;text-align:center;font-size:13.5px;line-height:15px;color:#111;">42</div>
<div style="left:229px;top:542px;width:22px;height:96px;background:linear-gradient(#c8dcf8 0,#8fb0e8 55%,#5d8edc 100%);border-top:1px solid #e8f0fc;"></div>
<div style="left:229px;top:584px;width:22px;text-align:center;font-size:13.5px;line-height:15px;color:#111;">43</div>
<div style="left:229px;top:638px;width:22px;height:23px;background:linear-gradient(#c8dcf8 0,#8fb0e8 55%,#5d8edc 100%);border-top:1px solid #e8f0fc;"></div>
<div style="left:251px;top:159px;width:1px;height:502px;background:#8a88aa;"></div>
<div style="left:293px;top:159px;width:41px;height:95px;background:#acd8e4;"></div>
<div style="left:293px;top:159px;width:1px;height:502px;background-image:linear-gradient(#a8a8a8 50%,transparent 50%);background-size:1px 2px;"></div>
<div style="left:334px;top:159px;width:1px;height:502px;background-image:linear-gradient(#a8a8a8 50%,transparent 50%);background-size:1px 2px;"></div>
<div style="left:416px;top:159px;width:1px;height:502px;background-image:linear-gradient(#a8a8a8 50%,transparent 50%);background-size:1px 2px;"></div>
<div style="left:498px;top:159px;width:1px;height:502px;background-image:linear-gradient(#a8a8a8 50%,transparent 50%);background-size:1px 2px;"></div>
<div style="left:580px;top:159px;width:1px;height:502px;background-image:linear-gradient(#a8a8a8 50%,transparent 50%);background-size:1px 2px;"></div>
<div style="left:662px;top:159px;width:1px;height:502px;background-image:linear-gradient(#a8a8a8 50%,transparent 50%);background-size:1px 2px;"></div>
<div style="left:744px;top:159px;width:1px;height:502px;background-image:linear-gradient(#a8a8a8 50%,transparent 50%);background-size:1px 2px;"></div>
<div style="left:825px;top:159px;width:1px;height:502px;background-image:linear-gradient(#a8a8a8 50%,transparent 50%);background-size:1px 2px;"></div>
<div style="left:907px;top:159px;width:1px;height:502px;background-image:linear-gradient(#a8a8a8 50%,transparent 50%);background-size:1px 2px;"></div>
<div style="left:989px;top:159px;width:1px;height:502px;background-image:linear-gradient(#a8a8a8 50%,transparent 50%);background-size:1px 2px;"></div>
<div style="left:1071px;top:159px;width:1px;height:502px;background-image:linear-gradient(#a8a8a8 50%,transparent 50%);background-size:1px 2px;"></div>
<div style="left:1153px;top:159px;width:1px;height:502px;background-image:linear-gradient(#a8a8a8 50%,transparent 50%);background-size:1px 2px;"></div>
<div style="left:1235px;top:159px;width:1px;height:502px;background-image:linear-gradient(#a8a8a8 50%,transparent 50%);background-size:1px 2px;"></div>
<div style="left:1317px;top:159px;width:1px;height:502px;background-image:linear-gradient(#a8a8a8 50%,transparent 50%);background-size:1px 2px;"></div>
<div style="left:252px;top:254px;width:1065px;height:1px;background-image:linear-gradient(90deg,#a8a8a8 50%,transparent 50%);background-size:2px 1px;"></div>
<div style="left:252px;top:350px;width:1065px;height:1px;background-image:linear-gradient(90deg,#a8a8a8 50%,transparent 50%);background-size:2px 1px;"></div>
<div style="left:252px;top:446px;width:1065px;height:1px;background-image:linear-gradient(90deg,#a8a8a8 50%,transparent 50%);background-size:2px 1px;"></div>
<div style="left:252px;top:542px;width:1065px;height:1px;background-image:linear-gradient(90deg,#a8a8a8 50%,transparent 50%);background-size:2px 1px;"></div>
<div style="left:252px;top:638px;width:1065px;height:1px;background-image:linear-gradient(90deg,#a8a8a8 50%,transparent 50%);background-size:2px 1px;"></div>
<div style="left:334px;top:180px;width:656px;height:1px;background:#000;box-shadow:0 0 0 0.3px #000;"></div>
<div style="left:990px;top:172px;width:328px;height:79px;border:1px solid #000;box-shadow:0 0 0 0.3px #000;"></div>
<div style="left:991px;top:173px;width:81px;height:77px;background:linear-gradient(#fbfbfb 0,#b4b4b4 60%,#7c7c7c 100%);"></div>
<div style="left:989px;top:199px;width:82px;text-align:center;font-size:12px;line-height:13px;color:#111;">-</div>
<div style="left:1071px;top:173px;width:82px;text-align:center;font-size:12px;line-height:13px;color:#4a4a4a;">K4</div>
<div style="left:1153px;top:173px;width:82px;text-align:center;font-size:12px;line-height:13px;color:#4a4a4a;">D60</div>
<div style="left:1153px;top:184px;width:82px;text-align:center;font-size:12px;line-height:13px;color:#0000ff;">1</div>
<div style="left:1235px;top:173px;width:82px;text-align:center;font-size:12px;line-height:13px;color:#4a4a4a;">D135</div>
<div style="left:1235px;top:184px;width:82px;text-align:center;font-size:12px;line-height:13px;color:#0000ff;">3</div>
<div style="left:1237px;top:201px;font-size:12px;line-height:13px;color:#008000;">加温区域个数</div>
<div style="left:1237px;top:212px;font-size:12px;line-height:13px;color:#008000;">显示</div>
<div style="left:334px;top:276px;width:934px;height:1px;background:#000;box-shadow:0 0 0 0.3px #000;"></div>
<div style="left:1285px;top:276px;width:32px;height:1px;background:#000;box-shadow:0 0 0 0.3px #000;"></div>
<div style="left:1268px;top:268px;width:17px;height:17px;border:1.3px solid #000;border-radius:50%;background:#fff;"></div>
<div style="left:1235px;top:255px;width:82px;text-align:center;font-size:12px;line-height:13px;color:#3c3c3c;">M10</div>
<div style="left:1316px;top:256px;width:1px;height:94px;background:#000;box-shadow:0 0 0 0.3px #000;"></div>
<div style="left:1237px;top:301px;font-size:12px;line-height:13px;color:#008000;">温度记录</div>
<div style="left:334px;top:372px;width:820px;height:1px;background:#000;box-shadow:0 0 0 0.3px #000;"></div>
<div style="left:1154px;top:364px;width:164px;height:79px;border:1px solid #000;box-shadow:0 0 0 0.3px #000;"></div>
<div style="left:1155px;top:365px;width:81px;height:77px;background:linear-gradient(#fbfbfb 0,#b4b4b4 60%,#7c7c7c 100%);"></div>
<div style="left:1153px;top:391px;width:82px;text-align:center;font-size:12px;line-height:13px;color:#111;">DINCP</div>
<div style="left:1235px;top:365px;width:82px;text-align:center;font-size:12px;line-height:13px;color:#4a4a4a;">D600</div>
<div style="left:1235px;top:376px;width:82px;text-align:center;font-size:12px;line-height:13px;color:#0000ff;">248</div>
<div style="left:1237px;top:393px;font-size:12px;line-height:13px;color:#008000;">今日数据记录</div>
<div style="left:1237px;top:404px;font-size:12px;line-height:13px;color:#008000;">个数</div>
<div style="left:334px;top:446px;width:1px;height:96px;background:#000;box-shadow:0 0 0 0.3px #000;"></div>
<div style="left:334px;top:448px;width:82px;text-align:center;font-size:12px;line-height:13px;color:#3c3c3c;">M10</div>
<div style="left:334px;top:468px;width:32px;height:1px;background:#000;box-shadow:0 0 0 0.3px #000;"></div>
<div style="left:382px;top:468px;width:690px;height:1px;background:#000;box-shadow:0 0 0 0.3px #000;"></div>
<div style="left:365px;top:459px;width:1px;height:18px;background:#000;box-shadow:0 0 0 0.3px #000;"></div>
<div style="left:381px;top:459px;width:1px;height:18px;background:#000;box-shadow:0 0 0 0.3px #000;"></div>
<div style="left:415px;top:446px;width:1px;height:22px;background:#000;box-shadow:0 0 0 0.3px #000;"></div>
<div style="left:335px;top:493px;font-size:12px;line-height:13px;color:#008000;">温度记录</div>
<div style="left:1072px;top:460px;width:246px;height:79px;border:1px solid #000;box-shadow:0 0 0 0.3px #000;"></div>
<div style="left:1073px;top:461px;width:81px;height:77px;background:linear-gradient(#fbfbfb 0,#b4b4b4 60%,#7c7c7c 100%);"></div>
<div style="left:1071px;top:487px;width:82px;text-align:center;font-size:12px;line-height:13px;color:#111;">OUT</div>
<div style="left:1153px;top:461px;width:82px;text-align:center;font-size:12px;line-height:13px;color:#4a4a4a;">T2</div>
<div style="left:1153px;top:472px;width:82px;text-align:center;font-size:12px;line-height:13px;color:#0000ff;">0</div>
<div style="left:1155px;top:489px;font-size:12px;line-height:13px;color:#008000;">断开温度记录</div>
<div style="left:1235px;top:461px;width:82px;text-align:center;font-size:12px;line-height:13px;color:#4a4a4a;">K7</div>
<div style="left:334px;top:542px;width:1px;height:96px;background:#000;box-shadow:0 0 0 0.3px #000;"></div>
<div style="left:290px;top:585px;width:42px;text-align:right;font-size:11.5px;line-height:13px;color:#111;">(270)</div>
<div style="left:334px;top:556px;width:245px;height:79px;border:1px solid #000;box-shadow:0 0 0 0.3px #000;"></div>
<div style="left:335px;top:557px;width:81px;height:77px;background:linear-gradient(#fbfbfb 0,#b4b4b4 60%,#7c7c7c 100%);"></div>
<div style="left:334px;top:583px;width:82px;text-align:center;font-size:12px;line-height:13px;color:#111;">=</div>
<div style="left:416px;top:557px;width:82px;text-align:center;font-size:12px;line-height:13px;color:#4a4a4a;">D203</div>
<div style="left:416px;top:568px;width:82px;text-align:center;font-size:12px;line-height:13px;color:#0000ff;">23</div>
<div style="left:418px;top:585px;font-size:12px;line-height:13px;color:#008000;">时</div>
<div style="left:498px;top:557px;width:82px;text-align:center;font-size:12px;line-height:13px;color:#4a4a4a;">K0</div>
<div style="left:580px;top:556px;width:245px;height:79px;border:1px solid #000;box-shadow:0 0 0 0.3px #000;"></div>
<div style="left:581px;top:557px;width:81px;height:77px;background:linear-gradient(#fbfbfb 0,#b4b4b4 60%,#7c7c7c 100%);"></div>
<div style="left:580px;top:583px;width:82px;text-align:center;font-size:12px;line-height:13px;color:#111;">=</div>
<div style="left:662px;top:557px;width:82px;text-align:center;font-size:12px;line-height:13px;color:#4a4a4a;">D202</div>
<div style="left:662px;top:568px;width:82px;text-align:center;font-size:12px;line-height:13px;color:#0000ff;">40</div>
<div style="left:664px;top:585px;font-size:12px;line-height:13px;color:#008000;">分</div>
<div style="left:744px;top:557px;width:81px;text-align:center;font-size:12px;line-height:13px;color:#4a4a4a;">K0</div>
<div style="left:826px;top:556px;width:246px;height:79px;border:1px solid #000;box-shadow:0 0 0 0.3px #000;"></div>
<div style="left:827px;top:557px;width:81px;height:77px;background:linear-gradient(#fbfbfb 0,#b4b4b4 60%,#7c7c7c 100%);"></div>
<div style="left:825px;top:583px;width:82px;text-align:center;font-size:12px;line-height:13px;color:#111;">=</div>
<div style="left:907px;top:557px;width:82px;text-align:center;font-size:12px;line-height:13px;color:#4a4a4a;">D201</div>
<div style="left:907px;top:568px;width:82px;text-align:center;font-size:12px;line-height:13px;color:#0000ff;">25</div>
<div style="left:909px;top:585px;font-size:12px;line-height:13px;color:#008000;">秒</div>
<div style="left:989px;top:557px;width:82px;text-align:center;font-size:12px;line-height:13px;color:#4a4a4a;">K0</div>
<div style="left:1072px;top:556px;width:246px;height:79px;border:1px solid #000;box-shadow:0 0 0 0.3px #000;"></div>
<div style="left:1073px;top:557px;width:81px;height:77px;background:linear-gradient(#fbfbfb 0,#b4b4b4 60%,#7c7c7c 100%);"></div>
<div style="left:1071px;top:583px;width:82px;text-align:center;font-size:12px;line-height:13px;color:#111;">DMOVP</div>
<div style="left:1153px;top:557px;width:82px;text-align:center;font-size:12px;line-height:13px;color:#4a4a4a;">K0</div>
<div style="left:1235px;top:557px;width:82px;text-align:center;font-size:12px;line-height:13px;color:#4a4a4a;">D600</div>
<div style="left:1235px;top:568px;width:82px;text-align:center;font-size:12px;line-height:13px;color:#0000ff;">248</div>
<div style="left:1237px;top:585px;font-size:12px;line-height:13px;color:#008000;">今日数据记录</div>
<div style="left:1237px;top:596px;font-size:12px;line-height:13px;color:#008000;">个数</div>
<div style="left:334px;top:638px;width:1px;height:23px;background:#000;box-shadow:0 0 0 0.3px #000;"></div>
<div style="left:334px;top:652px;width:245px;height:9px;border:2px solid #000;border-bottom:none;background:#fff;"></div>
<div style="left:336px;top:654px;width:80px;height:10px;background:linear-gradient(#fbfbfb,#e0e0e0);"></div>
<div style="left:416px;top:653px;width:82px;text-align:center;font-size:12px;line-height:13px;color:#4a4a4a;">D155</div>
<div style="left:498px;top:653px;width:82px;text-align:center;font-size:12px;line-height:13px;color:#4a4a4a;">D500</div>
<div style="left:579px;top:659px;width:575px;height:2px;background:#000;"></div>
<div style="left:1153px;top:652px;width:165px;height:9px;border:2px solid #000;border-bottom:none;background:#fff;"></div>
<div style="left:1155px;top:654px;width:80px;height:10px;background:linear-gradient(#fbfbfb,#e8e8e8);"></div>
<div style="left:1259px;top:653px;font-size:12.5px;line-height:13px;color:#ff00ff;">时间差</div>
<div style="left:229px;top:661px;width:1116px;height:18px;background:linear-gradient(#f6f6f6,#e6e6e6);border-top:1px solid #e0e0e0;"></div>
<svg style="position:absolute;left:234px;top:666px" width="6" height="9" viewBox="0 0 6 9"><path d="M5 0.5v8l-4-4z" fill="#888"/></svg>
<svg style="position:absolute;left:1325px;top:666px" width="6" height="9" viewBox="0 0 6 9"><path d="M1 0.5v8l4-4z" fill="#888"/></svg>
<div style="left:1335px;top:662px;width:9px;height:16px;background:linear-gradient(90deg,#e9f6fd,#b6dcf2);border:1px solid #3c7fb1;border-radius:2px;"></div>
<div style="left:1345px;top:138px;width:17px;height:523px;background:linear-gradient(90deg,#e8e8e8,#f3f3f3);border-left:1px solid #dcdcdc;"></div>
<div style="left:1347px;top:139px;width:13px;height:6px;background:linear-gradient(#e9f6fd,#b6dcf2);border:1px solid #3c7fb1;border-radius:2px;"></div>
<svg style="position:absolute;left:1349px;top:150px" width="9" height="6" viewBox="0 0 9 6"><path d="M0.5 5L4.5 1l4 4z" fill="#333"/></svg>
<div style="left:1346px;top:449px;width:13px;height:35px;background:linear-gradient(90deg,#f6f6f6,#dcdcdc);border:1px solid #979797;border-radius:2px;"></div>
<svg style="position:absolute;left:1349px;top:463px" width="7" height="7" viewBox="0 0 7 7"><path d="M0 0.5h7M0 2.5h7M0 4.5h7" stroke="#555"/></svg>
<svg style="position:absolute;left:1349px;top:650px" width="9" height="6" viewBox="0 0 9 6"><path d="M0.5 1h8l-4 4z" fill="#333"/></svg>
<div style="left:1345px;top:661px;width:17px;height:18px;background:#f0f0f0;"></div>
<div style="left:0px;top:684px;width:1366px;height:24px;background:#27344e;"></div>
<div style="left:464px;top:687px;width:1px;height:19px;background:#d0d6e0;"></div>
<div style="left:647px;top:687px;width:1px;height:19px;background:#d0d6e0;"></div>
<div style="left:792px;top:687px;width:1px;height:19px;background:#d0d6e0;"></div>
<div style="left:905px;top:687px;width:1px;height:19px;background:#d0d6e0;"></div>
<div style="left:1059px;top:687px;width:1px;height:19px;background:#d0d6e0;"></div>
<div style="left:1223px;top:687px;width:1px;height:19px;background:#d0d6e0;"></div>
<div style="left:1297px;top:687px;width:1px;height:19px;background:#d0d6e0;"></div>
<div style="left:1332px;top:687px;width:1px;height:19px;background:#d0d6e0;"></div>
<div style="left:797px;top:691px;font-size:12.5px;line-height:15px;color:#fff;">FX5U</div>
<div style="left:910px;top:691px;font-size:12.5px;line-height:15px;color:#fff;">本站</div>
<div style="left:1065px;top:691px;font-size:12.5px;line-height:15px;color:#fff;">241/406步</div>
<div style="left:1229px;top:691px;font-size:12.5px;line-height:15px;color:#fff;">改写</div>
<div style="left:1302px;top:691px;font-size:12.5px;line-height:15px;color:#6b7485;">大写</div>
<div style="left:1336px;top:691px;font-size:12.5px;line-height:15px;color:#fff;">数字</div>
<div style="left:0px;top:708px;width:1366px;height:36px;background:linear-gradient(90deg,#a8c0db 0,#a9c1dc 59%,#8c9fb8 64%,#8194ae 70%,#7f93ac 100%);"></div>
<div style="left:0px;top:708px;width:1366px;height:1px;background:#5f7590;"></div>
<div style="left:0px;top:709px;width:59px;height:35px;background:linear-gradient(90deg,#8c9db3,#8294ab);"></div>
<svg style="position:absolute;left:9px;top:709px" width="36" height="35" viewBox="0 0 36 35"><defs><radialGradient id="og" cx="50%" cy="85%" r="70%"><stop offset="0" stop-color="#22d0f0"/><stop offset="0.45" stop-color="#1a6fb8"/><stop offset="1" stop-color="#0e3f7a"/></radialGradient><linearGradient id="oh" x1="0" y1="0" x2="0" y2="1"><stop offset="0" stop-color="#e8f4fb" stop-opacity="0.9"/><stop offset="1" stop-color="#6aa8d8" stop-opacity="0.2"/></linearGradient></defs><circle cx="18" cy="18" r="17" fill="url(#og)" stroke="#163c6a" stroke-width="1"/><ellipse cx="18" cy="11" rx="13" ry="9" fill="url(#oh)"/><path d="M10 9q4-2 7 0l-1.5 7q-3-2-7 0z" fill="#f05a24"/><path d="M18.5 9q3.5 2 8 0l-1.5 7q-4 2-7.5 0z" fill="#8cc43c"/><path d="M8.5 17q4-2 7 0l-1.5 7q-3-2-7 0z" fill="#3aa0e8"/><path d="M16 17q3.5 2 8 0l-1.5 7q-4 2-7.5 0z" fill="#fbc52a"/></svg></svg>
<div style="left:60px;top:709px;width:59px;height:35px;background:linear-gradient(#d4e2f0 0,#b6cae0 50%,#a6bdd6 100%);border:1px solid #7d93ad;border-radius:3px;"></div>
<div style="left:184px;top:709px;width:59px;height:35px;background:linear-gradient(#d4e2f0 0,#b6cae0 50%,#a6bdd6 100%);border:1px solid #7d93ad;border-radius:3px;"></div>
<div style="left:245px;top:709px;width:59px;height:35px;background:linear-gradient(#d4e2f0 0,#b6cae0 50%,#a6bdd6 100%);border:1px solid #7d93ad;border-radius:3px;"></div>
<svg style="position:absolute;left:73px;top:714px" width="33" height="28" viewBox="0 0 33 28"><path d="M2 5h11l3 3h15v19H2z" fill="#f2cc6a" stroke="#b88d2a"/><rect x="4" y="9" width="25" height="17" fill="#fbe6a0"/><path d="M8 27v-8h17v8" fill="#6cb4e8" stroke="#3f7fb6"/></svg>
<svg style="position:absolute;left:139px;top:713px" width="23" height="28" viewBox="0 0 23 28"><rect x="1" y="1" width="21" height="26" rx="2" fill="#d9e6f3" stroke="#5a86b8"/><rect x="4" y="4" width="15" height="6" fill="#fff" stroke="#7aa"/><path d="M4 13h15M4 17h15M4 21h15M8 12v12M12 12v12M16 12v12" stroke="#4f87c7" stroke-width="1.5"/></svg>
<svg style="position:absolute;left:197px;top:714px" width="32" height="30" viewBox="0 0 32 30"><rect x="1" y="1" width="30" height="28" rx="3" fill="#e3232a" stroke="#9a1010"/><path d="M5 9h11M10 9v15M17 8h9v15h-9z" stroke="#fff" stroke-width="3" fill="none"/></svg>
<svg style="position:absolute;left:259px;top:713px" width="31" height="30" viewBox="0 0 31 30"><rect x="1" y="1" width="29" height="28" rx="4" fill="#3c5a8e" stroke="#111" stroke-width="2"/><rect x="6" y="6" width="17" height="15" fill="none" stroke="#dde" stroke-width="2"/><path d="M15 14l9 4-3 2 2 5-3 1-2-5-3 2z" fill="#eee"/></svg>
<svg style="position:absolute;left:1125px;top:720px" width="14" height="10" viewBox="0 0 14 10"><rect x="0.5" y="0.5" width="13" height="9" fill="none" stroke="#e6ecf3"/><path d="M3 3h8M3 6h8" stroke="#e6ecf3"/></svg>
<svg style="position:absolute;left:1155px;top:719px" width="18" height="14" viewBox="0 0 18 14"><ellipse cx="7" cy="7" rx="6.5" ry="5.5" fill="#3fbf3f"/><ellipse cx="12" cy="9" rx="5" ry="4" fill="#eee" stroke="#3fbf3f"/></svg>
<svg style="position:absolute;left:1180px;top:719px" width="16" height="14" viewBox="0 0 16 14"><path d="M2 13L11 4M7 1l8 6" stroke="#111" stroke-width="2"/></svg>
<svg style="position:absolute;left:1202px;top:719px" width="16" height="16" viewBox="0 0 16 16"><path d="M2 5h3l4-4v13l-4-4H2z" fill="#eee" stroke="#555"/><circle cx="12" cy="11" r="4" fill="#fff" stroke="#e00" stroke-width="1.6"/><path d="M9 8l6 6" stroke="#e00" stroke-width="1.6"/></svg>
<svg style="position:absolute;left:1228px;top:718px" width="16" height="16" viewBox="0 0 16 16"><rect x="2" y="3" width="11" height="12" fill="#eee" stroke="#222" stroke-width="1.5"/><path d="M5 1v4M10 1v4" stroke="#222" stroke-width="2"/></svg>
<svg style="position:absolute;left:1251px;top:719px" width="16" height="14" viewBox="0 0 16 14"><path d="M2 13h2v-2H2zM6 13h2V9H6zM10 13h2V6h-2zM14 13h2V3h-2z" fill="#eef"/></svg>
<div style="left:1298px;top:711px;font-size:12.5px;line-height:15px;color:#fff;">23:42</div>
<div style="left:1285px;top:729px;font-size:13px;line-height:15px;color:#fff;">2019/11/1</div>
<div style="left:1352px;top:709px;width:14px;height:35px;background:linear-gradient(90deg,#8a9cb2,#5f7290 40%,#7c8ea8);border-left:1px solid #c8d2de;"></div>
<div style="left:300px;top:11px;width:662px;height:439px;background:#c9dbec;border:1px solid #3a3a3a;border-radius:6px 6px 0 0;"></div>
<div style="left:301px;top:12px;width:660px;height:24px;background:linear-gradient(#b9cde0 0,#c6d7e8 40%,#d4e3f1 100%);border-radius:5px 5px 0 0;"></div>
<div style="left:302px;top:36px;width:657px;height:411px;background:#f0f0f0;border:1px solid #dfe8f1;border-top:none;"></div>
<div style="left:307px;top:17px;font-size:12.5px;line-height:14px;color:#3a4556;">时钟设置</div>
<div style="left:927px;top:16px;width:30px;height:17px;background:linear-gradient(#d9e5f1,#c3d4e6);border:1px solid #8597ae;border-radius:3px;"></div>
<svg style="position:absolute;left:935px;top:18px" width="14" height="12" viewBox="0 0 14 12"><path d="M3 2.5l8 7M11 2.5l-8 7" stroke="#404a58" stroke-width="3.6" stroke-linecap="round"/><path d="M3 2.5l8 7M11 2.5l-8 7" stroke="#f4f4f4" stroke-width="2" stroke-linecap="round"/></svg>
<div style="left:317px;top:43px;font-size:12px;line-height:14px;color:#000;">可编程控制器的时区</div>
<div style="left:435px;top:48px;width:506px;height:1px;background:#a0a0a0;"></div>
<div style="left:435px;top:49px;width:506px;height:1px;background:#fff;"></div>
<div style="left:317px;top:65px;font-size:12px;line-height:14px;color:#000;">时区</div>
<div style="left:391px;top:64px;width:82px;height:20px;background:#f0f0f0;border:1px solid #d5d5d5;border-radius:2px;"></div>
<div style="left:394px;top:66px;font-size:12px;line-height:14px;color:#000;font-family:'Liberation Mono',monospace;letter-spacing:-1.3px;">UTC+09:00</div>
<div style="left:500px;top:65px;font-size:12px;line-height:14px;color:#000;">注释</div>
<div style="left:554px;top:63px;width:300px;height:21px;background:#f0f0f0;border:1px solid #d8d8d8;border-radius:2px;"></div>
<div style="left:317px;top:92px;font-size:12px;line-height:14px;color:#000;">日期</div>
<div style="left:348px;top:96px;width:182px;height:1px;background:#a0a0a0;"></div>
<div style="left:348px;top:97px;width:182px;height:1px;background:#fff;"></div>
<div style="left:536px;top:92px;font-size:12px;line-height:14px;color:#000;">时间</div>
<div style="left:562px;top:96px;width:103px;height:1px;background:#a0a0a0;"></div>
<div style="left:562px;top:97px;width:103px;height:1px;background:#fff;"></div>
<div style="left:668px;top:92px;font-size:12px;line-height:14px;color:#000;">执行目标指定(S)</div>
<div style="left:764px;top:96px;width:178px;height:1px;background:#a0a0a0;"></div>
<div style="left:764px;top:97px;width:178px;height:1px;background:#fff;"></div>
<div style="left:312px;top:108px;width:219px;height:186px;background:#fff;"></div>
<div style="left:312px;top:112px;width:219px;height:178px;background:#fff;border:1px solid #a0a0a0;"></div>
<div style="left:391px;top:125px;font-size:12.5px;line-height:14px;color:#000;">1980年1月</div>
<svg style="position:absolute;left:320px;top:126px" width="6" height="10" viewBox="0 0 6 10"><path d="M5 0.5v8l-4-4z" fill="#a8a8a8"/></svg>
<svg style="position:absolute;left:516px;top:126px" width="6" height="10" viewBox="0 0 6 10"><path d="M1 0.5v8l4-4z" fill="#111"/></svg>
<div style="left:315px;top:148px;width:30px;text-align:center;font-size:12px;line-height:14px;color:#111;">周日</div>
<div style="left:345px;top:148px;width:30px;text-align:center;font-size:12px;line-height:14px;color:#111;">周一</div>
<div style="left:375px;top:148px;width:30px;text-align:center;font-size:12px;line-height:14px;color:#111;">周二</div>
<div style="left:405px;top:148px;width:30px;text-align:center;font-size:12px;line-height:14px;color:#111;">周三</div>
<div style="left:435px;top:148px;width:30px;text-align:center;font-size:12px;line-height:14px;color:#111;">周四</div>
<div style="left:465px;top:148px;width:30px;text-align:center;font-size:12px;line-height:14px;color:#111;">周五</div>
<div style="left:495px;top:148px;width:30px;text-align:center;font-size:12px;line-height:14px;color:#111;">周六</div>
<div style="left:320px;top:164px;width:202px;height:1px;background:#e4e4e4;"></div>
<div style="left:377px;top:166px;width:29px;height:17px;background:linear-gradient(#f4f4f4,#dedede);border:1px solid #3a80c8;border-radius:2px;"></div>
<div style="left:368px;top:167px;width:30px;text-align:right;font-size:12.5px;line-height:14px;color:#1d63c6;">1</div>
<div style="left:398px;top:167px;width:30px;text-align:right;font-size:12.5px;line-height:14px;color:#000;">2</div>
<div style="left:428px;top:167px;width:30px;text-align:right;font-size:12.5px;line-height:14px;color:#000;">3</div>
<div style="left:458px;top:167px;width:30px;text-align:right;font-size:12.5px;line-height:14px;color:#000;">4</div>
<div style="left:488px;top:167px;width:30px;text-align:right;font-size:12.5px;line-height:14px;color:#000;">5</div>
<div style="left:308px;top:184px;width:30px;text-align:right;font-size:12.5px;line-height:14px;color:#000;">6</div>
<div style="left:338px;top:184px;width:30px;text-align:right;font-size:12.5px;line-height:14px;color:#000;">7</div>
<div style="left:368px;top:184px;width:30px;text-align:right;font-size:12.5px;line-height:14px;color:#000;">8</div>
<div style="left:398px;top:184px;width:30px;text-align:right;font-size:12.5px;line-height:14px;color:#000;">9</div>
<div style="left:428px;top:184px;width:30px;text-align:right;font-size:12.5px;line-height:14px;color:#000;">10</div>
<div style="left:458px;top:184px;width:30px;text-align:right;font-size:12.5px;line-height:14px;color:#000;">11</div>
<div style="left:488px;top:184px;width:30px;text-align:right;font-size:12.5px;line-height:14px;color:#000;">12</div>
<div style="left:308px;top:201px;width:30px;text-align:right;font-size:12.5px;line-height:14px;color:#000;">13</div>
<div style="left:338px;top:201px;width:30px;text-align:right;font-size:12.5px;line-height:14px;color:#000;">14</div>
<div style="left:368px;top:201px;width:30px;text-align:right;font-size:12.5px;line-height:14px;color:#000;">15</div>
<div style="left:398px;top:201px;width:30px;text-align:right;font-size:12.5px;line-height:14px;color:#000;">16</div>
<div style="left:428px;top:201px;width:30px;text-align:right;font-size:12.5px;line-height:14px;color:#000;">17</div>
<div style="left:458px;top:201px;width:30px;text-align:right;font-size:12.5px;line-height:14px;color:#000;">18</div>
<div style="left:488px;top:201px;width:30px;text-align:right;font-size:12.5px;line-height:14px;color:#000;">19</div>
<div style="left:308px;top:218px;width:30px;text-align:right;font-size:12.5px;line-height:14px;color:#000;">20</div>
<div style="left:338px;top:218px;width:30px;text-align:right;font-size:12.5px;line-height:14px;color:#000;">21</div>
<div style="left:368px;top:218px;width:30px;text-align:right;font-size:12.5px;line-height:14px;color:#000;">22</div>
<div style="left:398px;top:218px;width:30px;text-align:right;font-size:12.5px;line-height:14px;color:#000;">23</div>
<div style="left:428px;top:218px;width:30px;text-align:right;font-size:12.5px;line-height:14px;color:#000;">24</div>
<div style="left:458px;top:218px;width:30px;text-align:right;font-size:12.5px;line-height:14px;color:#000;">25</div>
<div style="left:488px;top:218px;width:30px;text-align:right;font-size:12.5px;line-height:14px;color:#000;">26</div>
<div style="left:308px;top:235px;width:30px;text-align:right;font-size:12.5px;line-height:14px;color:#000;">27</div>
<div style="left:338px;top:235px;width:30px;text-align:right;font-size:12.5px;line-height:14px;color:#000;">28</div>
<div style="left:368px;top:235px;width:30px;text-align:right;font-size:12.5px;line-height:14px;color:#000;">29</div>
<div style="left:398px;top:235px;width:30px;text-align:right;font-size:12.5px;line-height:14px;color:#000;">30</div>
<div style="left:428px;top:235px;width:30px;text-align:right;font-size:12.5px;line-height:14px;color:#000;">31</div>
<div style="left:458px;top:235px;width:30px;text-align:right;font-size:12.5px;line-height:14px;color:#7a7a7a;">1</div>
<div style="left:488px;top:235px;width:30px;text-align:right;font-size:12.5px;line-height:14px;color:#7a7a7a;">2</div>
<div style="left:308px;top:252px;width:30px;text-align:right;font-size:12.5px;line-height:14px;color:#7a7a7a;">3</div>
<div style="left:338px;top:252px;width:30px;text-align:right;font-size:12.5px;line-height:14px;color:#7a7a7a;">4</div>
<div style="left:368px;top:252px;width:30px;text-align:right;font-size:12.5px;line-height:14px;color:#7a7a7a;">5</div>
<div style="left:398px;top:252px;width:30px;text-align:right;font-size:12.5px;line-height:14px;color:#7a7a7a;">6</div>
<div style="left:428px;top:252px;width:30px;text-align:right;font-size:12.5px;line-height:14px;color:#7a7a7a;">7</div>
<div style="left:458px;top:252px;width:30px;text-align:right;font-size:12.5px;line-height:14px;color:#7a7a7a;">8</div>
<div style="left:488px;top:252px;width:30px;text-align:right;font-size:12.5px;line-height:14px;color:#7a7a7a;">9</div>
<div style="left:367px;top:269px;width:28px;height:15px;border:1px solid #1f6fd4;border-radius:2px;"></div>
<div style="left:401px;top:270px;font-size:12.5px;line-height:14px;color:#000;">今天: 1980/1/1</div>
<div style="left:312px;top:299px;width:186px;height:26px;background:#fff;border:1px solid #d5d5d5;border-radius:2px;"></div>
<div style="left:314px;top:306px;font-size:12px;line-height:14px;color:#000;font-family:'Liberation Mono',monospace;letter-spacing:-1.3px;">1980/ 1/ 1</div>
<div style="left:480px;top:302px;width:15px;height:10px;background:linear-gradient(#f2f2f2,#e0e0e0);border:1px solid #b3b3b3;border-radius:2px;"></div>
<div style="left:480px;top:312px;width:15px;height:10px;background:linear-gradient(#f2f2f2,#e0e0e0);border:1px solid #b3b3b3;border-radius:2px;"></div>
<svg style="position:absolute;left:484px;top:305px" width="7" height="4" viewBox="0 0 7 4"><path d="M0 4l3.5-3.5L7 4z" fill="#4b6aa8"/></svg>
<svg style="position:absolute;left:484px;top:315px" width="7" height="4" viewBox="0 0 7 4"><path d="M0 0l3.5 3.5L7 0z" fill="#4b6aa8"/></svg>
<div style="left:513px;top:299px;width:122px;height:26px;background:#fff;border:1px solid #d5d5d5;border-radius:2px;"></div>
<div style="left:521px;top:306px;font-size:12px;line-height:14px;color:#000;font-family:'Liberation Mono',monospace;letter-spacing:-1.3px;">6:24:48</div>
<div style="left:617px;top:302px;width:15px;height:10px;background:linear-gradient(#f2f2f2,#e0e0e0);border:1px solid #b3b3b3;border-radius:2px;"></div>
<div style="left:617px;top:312px;width:15px;height:10px;background:linear-gradient(#f2f2f2,#e0e0e0);border:1px solid #b3b3b3;border-radius:2px;"></div>
<svg style="position:absolute;left:621px;top:305px" width="7" height="4" viewBox="0 0 7 4"><path d="M0 4l3.5-3.5L7 4z" fill="#4b6aa8"/></svg>
<svg style="position:absolute;left:621px;top:315px" width="7" height="4" viewBox="0 0 7 4"><path d="M0 0l3.5 3.5L7 0z" fill="#4b6aa8"/></svg>
<div style="left:314px;top:331px;width:155px;height:23px;background:linear-gradient(#f2f2f2 0,#ebebeb 50%,#dddddd 51%,#cfcfcf 100%);border:1px solid #707070;border-radius:3px;box-shadow:inset 0 0 0 1px #fcfcfc;"></div>
<div style="left:314px;top:335px;width:155px;text-align:center;font-size:12px;line-height:14px;color:#000;">获取计算机的时间(T)</div>
<div style="left:477px;top:331px;width:156px;height:23px;background:linear-gradient(#f2f2f2 0,#ebebeb 50%,#dddddd 51%,#cfcfcf 100%);border:1px solid #707070;border-radius:3px;box-shadow:inset 0 0 0 1px #fcfcfc;"></div>
<div style="left:477px;top:335px;width:156px;text-align:center;font-size:12px;line-height:14px;color:#000;">获取可编程控制器的时间(P)</div>
<svg style="position:absolute;left:538px;top:122px" width="128" height="128" viewBox="0 0 128 128"><circle cx="64" cy="64" r="62" fill="#fff" stroke="#808080" stroke-width="4.5"/><line x1="90.0" y1="19.0" x2="91.5" y2="16.4" stroke="#888" stroke-width="2"/><line x1="109.0" y1="38.0" x2="111.6" y2="36.5" stroke="#888" stroke-width="2"/><line x1="109.0" y1="90.0" x2="111.6" y2="91.5" stroke="#888" stroke-width="2"/><line x1="90.0" y1="109.0" x2="91.5" y2="111.6" stroke="#888" stroke-width="2"/><line x1="38.0" y1="109.0" x2="36.5" y2="111.6" stroke="#888" stroke-width="2"/><line x1="19.0" y1="90.0" x2="16.4" y2="91.5" stroke="#888" stroke-width="2"/><line x1="19.0" y1="38.0" x2="16.4" y2="36.5" stroke="#888" stroke-width="2"/><line x1="38.0" y1="19.0" x2="36.5" y2="16.4" stroke="#888" stroke-width="2"/><text x="65" y="24" font-size="20" font-weight="bold" text-anchor="middle" font-family="Liberation Sans">12</text><text x="112" y="72" font-size="20" font-weight="bold" text-anchor="middle" font-family="Liberation Sans">3</text><text x="64" y="118" font-size="20" font-weight="bold" text-anchor="middle" font-family="Liberation Sans">6</text><text x="18" y="72" font-size="20" font-weight="bold" text-anchor="middle" font-family="Liberation Sans">9</text><line x1="65" y1="65" x2="58" y2="92" stroke="#000" stroke-width="1.2"/><line x1="65" y1="65" x2="96" y2="107" stroke="#000" stroke-width="1.1"/><line x1="74" y1="68" x2="29.5" y2="53" stroke="#000" stroke-width="1.1"/></svg>
<div style="left:674px;top:117px;width:111px;height:20px;background:linear-gradient(#f2f2f2 0,#ebebeb 50%,#dddddd 51%,#cfcfcf 100%);border:1px solid #707070;border-radius:3px;"></div>
<div style="left:678px;top:120px;font-size:12.5px;line-height:14px;color:#000;">当前站指定</div>
<svg style="position:absolute;left:769px;top:125px" width="9" height="5" viewBox="0 0 9 5"><path d="M0 0h9l-4.5 4.5z" fill="#000"/></svg>
<div style="left:665px;top:150px;font-size:12px;line-height:14px;color:#a0a0a0;">对象网络号指定(W)</div>
<div style="left:674px;top:167px;width:84px;height:21px;background:#f0f0f0;border:1px solid #c9c9c9;border-radius:2px;"></div>
<div style="left:833px;top:150px;font-size:12px;line-height:14px;color:#a0a0a0;">组号指定(G)</div>
<div style="left:833px;top:167px;width:70px;height:21px;background:#f0f0f0;border:1px solid #c9c9c9;border-radius:2px;"></div>
<div style="left:675px;top:235px;width:268px;height:118px;border:1px solid #d5dfe5;border-radius:3px;"></div>
<div style="left:680px;top:228px;width:30px;height:12px;background:#f0f0f0;"></div>
<div style="left:683px;top:227px;font-size:12px;line-height:14px;color:#000;">说明</div>
<div style="left:686px;top:252.0px;font-size:12px;line-height:13px;color:#000;">获取计算机时间时，可获取计算机所在时区的</div>
<div style="left:686px;top:264.2px;font-size:12px;line-height:13px;color:#000;">时间。</div>
<div style="left:686px;top:276.4px;font-size:12px;line-height:13px;color:#000;">请将可编程控制器的时区与计算机的</div>
<div style="left:686px;top:288.6px;font-size:12px;line-height:13px;color:#000;">时区保持一致后执行。</div>
<div style="left:686px;top:300.8px;font-size:12px;line-height:13px;color:#000;">获取可编程控制器的时间时，可从可编程控制</div>
<div style="left:686px;top:313.0px;font-size:12px;line-height:13px;color:#000;">器获取时钟设置。</div>
<div style="left:313px;top:360px;width:630px;height:1px;background:#a0a0a0;"></div>
<div style="left:313px;top:361px;width:630px;height:1px;background:#fff;"></div>
<div style="left:783px;top:367px;width:73px;height:24px;background:linear-gradient(#e8f6fd 0,#dcf0fb 50%,#bfe3f7 51%,#a9d8f3 100%);border:1px solid #3c7fb1;border-radius:3px;box-shadow:inset 0 0 0 1px #48d1fa;"></div>
<div style="left:783px;top:372px;width:73px;text-align:center;font-size:12px;line-height:14px;color:#000;">执行(E)</div>
<div style="left:868px;top:367px;width:73px;height:24px;background:linear-gradient(#f2f2f2 0,#ebebeb 50%,#dddddd 51%,#cfcfcf 100%);border:1px solid #707070;border-radius:3px;box-shadow:inset 0 0 0 1px #fcfcfc;"></div>
<div style="left:868px;top:372px;width:73px;text-align:center;font-size:12px;line-height:14px;color:#000;">关闭</div>
</body></html>
